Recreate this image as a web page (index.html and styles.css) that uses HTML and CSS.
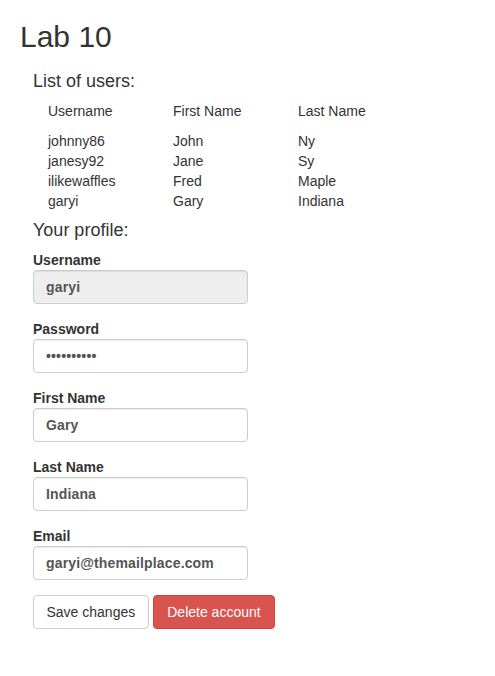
FILE: index.html
```html
<!DOCTYPE html>
<html>
<head>
<meta charset="utf-8">
<title>Lab 10</title>
<link rel="stylesheet" href="styles.css">
</head>
<body>
<h1 class="title">Lab 10</h1>
<div class="content">
  <h4 class="section">List of users:</h4>
  <table class="users">
    <thead>
      <tr><th>Username</th><th>First Name</th><th>Last Name</th></tr>
    </thead>
    <tbody>
      <tr><td>johnny86</td><td>John</td><td>Ny</td></tr>
      <tr><td>janesy92</td><td>Jane</td><td>Sy</td></tr>
      <tr><td>ilikewaffles</td><td>Fred</td><td>Maple</td></tr>
      <tr><td>garyi</td><td>Gary</td><td>Indiana</td></tr>
    </tbody>
  </table>
  <h4 class="section profile">Your profile:</h4>
  <form class="form">
    <div class="group">
      <label class="label">Username</label>
      <input class="field" type="text" value="garyi" disabled>
    </div>
    <div class="group">
      <label class="label">Password</label>
      <input class="field" type="password" value="abcdefghij">
    </div>
    <div class="group">
      <label class="label">First Name</label>
      <input class="field" type="text" value="Gary">
    </div>
    <div class="group">
      <label class="label">Last Name</label>
      <input class="field" type="text" value="Indiana">
    </div>
    <div class="group">
      <label class="label">Email</label>
      <input class="field" type="text" value="garyi@themailplace.com">
    </div>
    <div class="actions">
      <button type="button" class="btn btn-default">Save changes</button>
      <button type="button" class="btn btn-danger">Delete account</button>
    </div>
  </form>
</div>
</body>
</html>
```

FILE: styles.css
```css
html, body {
  margin: 0;
  padding: 0;
  background: #fff;
}
body {
  font-family: "Liberation Sans", Arial, sans-serif;
  font-size: 14px;
  line-height: 20px;
  color: #333;
}
.title {
  font-size: 30px;
  line-height: 33px;
  font-weight: 500;
  margin: 20px 0 0 20px;
}
.content {
  padding-left: 33px;
}
.section {
  font-size: 18px;
  line-height: 20px;
  font-weight: 500;
  margin: 18px 0 0 0;
}
.users {
  border-collapse: collapse;
  margin: 10px 0 0 15px;
}
.users th, .users td {
  width: 125px;
  padding: 0;
  text-align: left;
  font-weight: normal;
  vertical-align: top;
}
.users thead th {
  padding-bottom: 10px;
}
.profile {
  margin-top: 9px;
  margin-bottom: 10px;
}
.form {
  margin: 0;
}
.group {
  display: flex;
  flex-direction: column;
  align-items: flex-start;
  margin-bottom: 15px;
}
.label {
  font-weight: bold;
  line-height: 20px;
}
.field {
  box-sizing: border-box;
  width: 215px;
  height: 34px;
  margin: 0;
  padding: 6px 12px;
  border: 1px solid #ccc;
  border-radius: 4px;
  background: #fff;
  font-family: "Liberation Sans", Arial, sans-serif;
  font-size: 14px;
  font-weight: bold;
  color: #555;
  letter-spacing: 0.15px;
  box-shadow: inset 0 1px 1px rgba(0,0,0,0.075);
}
.field:disabled {
  background: #eee;
  color: #555;
}
.actions {
  display: flex;
  gap: 4px;
}
.btn {
  box-sizing: border-box;
  height: 34px;
  padding: 6px 12px;
  border: 1px solid #ccc;
  border-radius: 4px;
  font-family: "Liberation Sans", Arial, sans-serif;
  font-size: 14px;
  line-height: 20px;
  cursor: pointer;
}
.btn-default {
  background: #fff;
  color: #333;
  padding: 6px 12.5px;
}
.btn-danger {
  background: #d9534f;
  border-color: #d43f3a;
  color: #fff;
  padding: 6px 13.5px;
}
```
